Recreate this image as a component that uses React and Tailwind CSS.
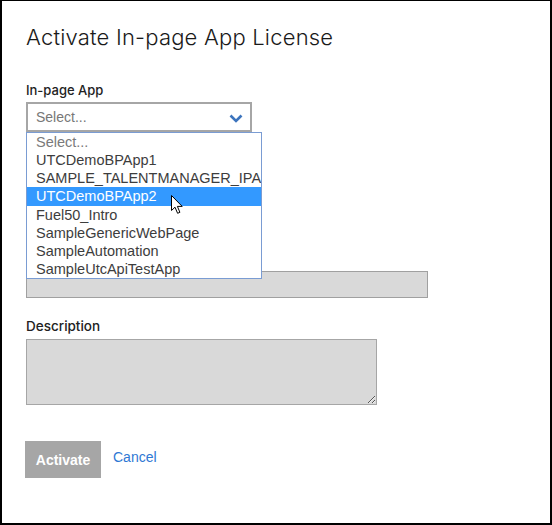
import React from 'react';

const apps = [
  'Select...',
  'UTCDemoBPApp1',
  'SAMPLE_TALENTMANAGER_IPA',
  'UTCDemoBPApp2',
  'Fuel50_Intro',
  'SampleGenericWebPage',
  'SampleAutomation',
  'SampleUtcApiTestApp',
];

const Chevron = () => (
  <svg width="14" height="9" viewBox="0 0 14 9" className="absolute right-[7px] top-[10px]">
    <path d="M1.5 1.5 L7 7 L12.5 1.5" fill="none" stroke="#3c74bd" strokeWidth="2.6" />
  </svg>
);

const Pointer = () => (
  <svg width="13" height="20" viewBox="0 0 13 20" className="absolute left-[144px] top-[62px]">
    <path
      d="M0.5 0.5 L0.5 15.5 L4 12.2 L6.6 18.3 L8.9 17.3 L6.4 11.4 L11.2 11.4 Z"
      fill="#fff"
      stroke="#000"
      strokeWidth="1"
      strokeLinejoin="round"
    />
  </svg>
);

const itemClass = (i, selected) => {
  if (i === selected) {
    return 'h-[19px] pl-[9px] text-[14.5px] leading-[19px] whitespace-nowrap overflow-hidden bg-[#3399ff] text-white';
  }
  if (i === 0) {
    return 'h-[18px] pl-[9px] text-[14.5px] leading-[18px] whitespace-nowrap overflow-hidden text-[#7a7a7a]';
  }
  return 'h-[18px] pl-[9px] text-[14.5px] leading-[18px] whitespace-nowrap overflow-hidden text-[#3d3d3d]';
};

const App = () => {
  const selected = 3;

  return (
    <div className="w-[552px] h-[525px] bg-white border-black border-t border-l-2 border-r-2 border-b-2 font-['Liberation_Sans',Arial,sans-serif]">
      <div className="pl-[24px] pt-[25px]">
        <h1 className="font-['Inter','Liberation_Sans',sans-serif] font-light text-[22px] leading-[22px] tracking-[0.2px] text-[#1a1a1a]">
          Activate In-page App License
        </h1>

        <label className="block mt-[34px] font-['Inter','Liberation_Sans',sans-serif] font-medium text-[13px] leading-[16px] text-[#222]">
          In-page App
        </label>

        {/* select with its open list */}
        <div className="relative mt-[4px] w-[226px]">
          <div className="relative h-[30px] border-2 border-[#a6a6a6] bg-white flex items-center pl-[8px]">
            <span className="text-[14px] leading-[16px] text-[#777]">Select...</span>
            <Chevron />
          </div>

          <ul className="absolute z-10 left-0 top-[30px] w-[236px] bg-white border border-[#7a9cd3]">
            {apps.map((app, i) => (
              <li key={app} className={itemClass(i, selected)}>
                {app}
              </li>
            ))}
            <Pointer />
          </ul>
        </div>

        {/* field hidden behind the list */}
        <div className="mt-[8px] text-[13px] leading-[16px] font-bold text-[#222] invisible">Name</div>
        <div className="mt-[115px] w-[402px] h-[27px] bg-[#d9d9d9] border border-[#a0a0a0]" />

        <label className="block mt-[20px] font-['Inter','Liberation_Sans',sans-serif] font-medium text-[13.5px] leading-[16px] text-[#222]">
          Description
        </label>
        <textarea
          className="block mt-[5px] w-[351px] h-[66px] bg-[#d9d9d9] border border-[#a6a6a6] outline-none"
          disabled
        />

        <div className="flex mt-[36px] -ml-[1px]">
          <button
            type="button"
            className="w-[76px] h-[37px] bg-[#a6a6a6] text-white font-bold text-[14px] leading-[16px]"
          >
            Activate
          </button>
          <a className="ml-[12px] mt-[8px] text-[14px] leading-[16px] text-[#2f78d4] cursor-pointer">
            Cancel
          </a>
        </div>
      </div>
    </div>
  );
};

export default App;
